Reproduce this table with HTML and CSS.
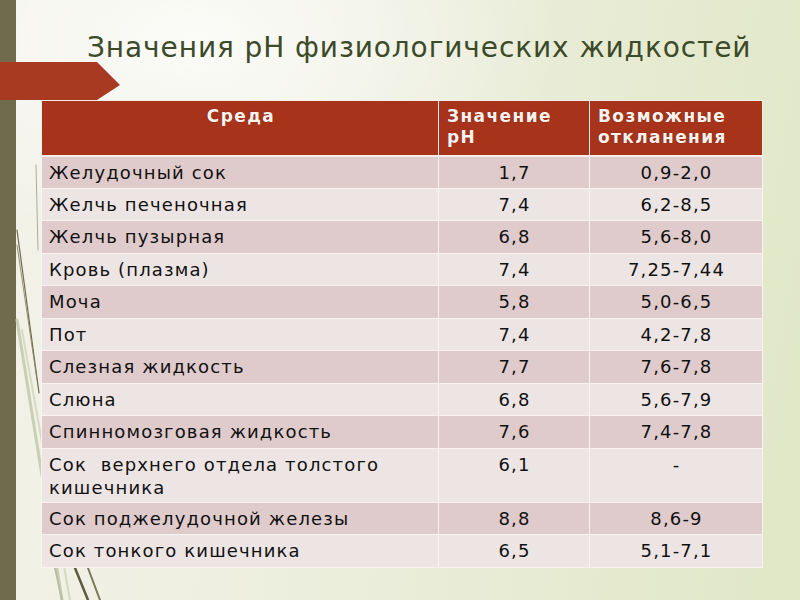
FILE: index.html
```html
<!DOCTYPE html>
<html lang="ru">
<head>
<meta charset="utf-8">
<title>Значения pH физиологических жидкостей</title>
<link rel="stylesheet" href="styles.css">
</head>
<body>
<div class="slide">
  <div class="rail"></div>
  <svg class="decor" width="130" height="600" viewBox="0 0 130 600" aria-hidden="true">
    <g fill="none" stroke-linecap="round">
      <line x1="17" y1="230" x2="39" y2="393" stroke="#6f6b4c" stroke-width="1.2"/>
      <line x1="17" y1="245" x2="37" y2="380" stroke="#8a8766" stroke-width="0.9"/>
      <line x1="36" y1="165" x2="38" y2="250" stroke="#9c9a80" stroke-width="0.8"/>
      <line x1="17" y1="320" x2="62" y2="600" stroke="#c9cfb3" stroke-width="3"/>
      <line x1="22" y1="330" x2="70" y2="600" stroke="#d5dbc0" stroke-width="2"/>
      <line x1="55" y1="568" x2="62" y2="600" stroke="#b9bfa4" stroke-width="2"/>
      <line x1="75" y1="568" x2="88" y2="600" stroke="#5e5b40" stroke-width="2.5"/>
      <line x1="88" y1="568" x2="100" y2="600" stroke="#7a775a" stroke-width="2"/>
    </g>
  </svg>
  <div class="banner"></div>
  <main class="main">
    <h1 class="title">Значения pH физиологических жидкостей</h1>
    <table class="ph-table">
      <colgroup>
        <col class="c1"><col class="c2"><col class="c3">
      </colgroup>
      <thead>
        <tr>
          <th class="h-center">Среда</th>
          <th>Значение<br>pH</th>
          <th>Возможные<br>откланения</th>
        </tr>
      </thead>
      <tbody>
        <tr class="dark"><td>Желудочный сок</td><td>1,7</td><td>0,9-2,0</td></tr>
        <tr class="light"><td>Желчь печеночная</td><td>7,4</td><td>6,2-8,5</td></tr>
        <tr class="dark"><td>Желчь пузырная</td><td>6,8</td><td>5,6-8,0</td></tr>
        <tr class="light"><td>Кровь (плазма)</td><td>7,4</td><td>7,25-7,44</td></tr>
        <tr class="dark"><td>Моча</td><td>5,8</td><td>5,0-6,5</td></tr>
        <tr class="light"><td>Пот</td><td>7,4</td><td>4,2-7,8</td></tr>
        <tr class="dark"><td>Слезная жидкость</td><td>7,7</td><td>7,6-7,8</td></tr>
        <tr class="light"><td>Слюна</td><td>6,8</td><td>5,6-7,9</td></tr>
        <tr class="dark"><td>Спинномозговая жидкость</td><td>7,6</td><td>7,4-7,8</td></tr>
        <tr class="light tall"><td>Сок &nbsp;верхнего отдела толстого<br>кишечника</td><td>6,1</td><td>-</td></tr>
        <tr class="dark"><td>Сок поджелудочной железы</td><td>8,8</td><td>8,6-9</td></tr>
        <tr class="light"><td>Сок тонкого кишечника</td><td>6,5</td><td>5,1-7,1</td></tr>
      </tbody>
    </table>
  </main>
</div>
</body>
</html>
```
FILE: styles.css
```css
* { box-sizing: border-box; }
html, body { margin: 0; padding: 0; }
body {
  width: 800px;
  height: 600px;
  overflow: hidden;
  font-family: "DejaVu Sans", Verdana, sans-serif;
}
.slide {
  position: relative;
  width: 800px;
  height: 600px;
  display: flex;
  background:
    radial-gradient(ellipse 520px 300px at 200px 40px, rgba(255,255,255,0.75), rgba(255,255,255,0) 70%),
    linear-gradient(100deg, #f3f2ea 0%, #eceedd 45%, #e0e7c6 100%);
}
.rail {
  width: 16px;
  flex: none;
  background: #6f6b4c;
}
.decor {
  position: absolute;
  left: 0;
  top: 0;
}
.banner {
  position: absolute;
  left: 0;
  top: 62px;
  width: 120px;
  height: 38px;
  background: #a83a22;
  clip-path: polygon(0 0, 97px 0, 120px 23px, 97px 38px, 0 38px);
}
.main {
  position: relative;
  flex: 1;
  padding: 28px 0 0 25px;
}
.title {
  margin: 0 0 0 46px;
  font-weight: normal;
  font-size: 28px;
  line-height: 40px;
  letter-spacing: 0.9px;
  color: #3d4a29;
  white-space: nowrap;
}
.ph-table {
  margin-top: 32px;
  border-collapse: collapse;
  table-layout: fixed;
  width: 721px;
  border: 1px solid #f6f4f0;
}
.c1 { width: 397px; }
.c2 { width: 151px; }
.c3 { width: 173px; }
.ph-table th {
  height: 55px;
  background: #a7331b;
  color: #fdf3ee;
  font-size: 17px;
  font-weight: bold;
  letter-spacing: 1.4px;
  line-height: 21px;
  text-align: left;
  vertical-align: top;
  padding: 5px 6px 0 8px;
  border: 1px solid #f3eee9;
  border-bottom: 2px solid #f3eee9;
  text-shadow: 0 0 1px rgba(60,10,0,0.6);
}
.ph-table th.h-center { text-align: center; }
.ph-table td {
  height: 32.5px;
  font-size: 18px;
  letter-spacing: 1.15px;
  line-height: 23px;
  color: #111;
  vertical-align: top;
  padding: 4px 6px 0 7px;
  text-align: center;
  border: 1px solid #f7f3f1;
}
.ph-table td:first-child { text-align: left; }
.ph-table tr.tall td { height: 54px; }
.dark td { background: #dfcbcb; }
.light td { background: #ede5e4; }
```
